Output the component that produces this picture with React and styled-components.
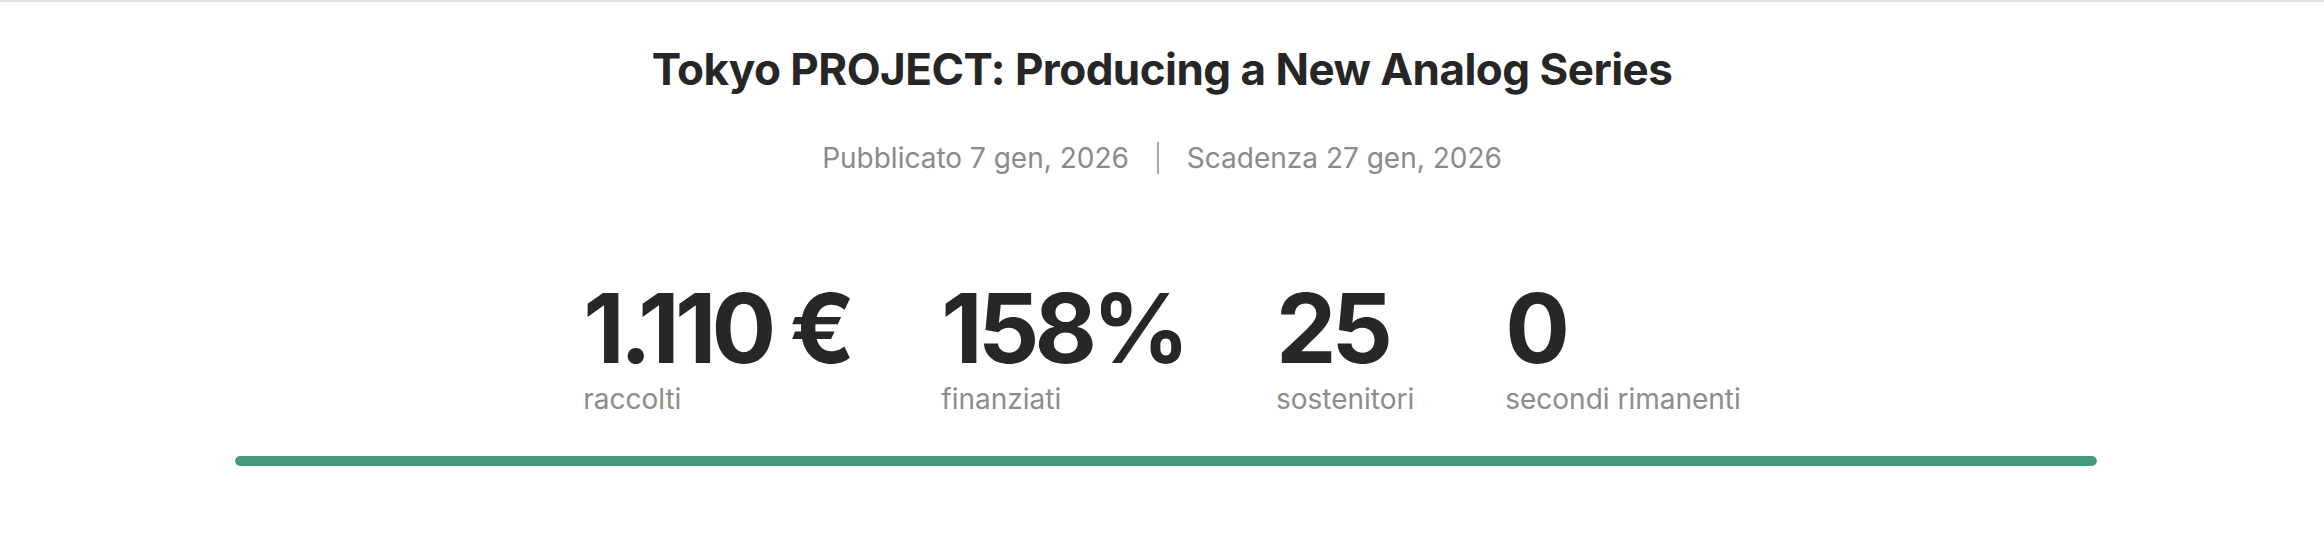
import styled, { createGlobalStyle } from 'styled-components';

const GlobalStyle = createGlobalStyle`
  body {
    margin: 0;
    background: #fff;
    font-family: Inter, "Noto Sans", sans-serif;
    color: #2a2a2a;
  }
`;

const Page = styled.section`
  border-top: 2px solid #e2e2e2;
  padding: 41px 0 60px;
  display: flex;
  flex-direction: column;
  align-items: center;
`;

const Title = styled.h1`
  margin: 0;
  font-size: 44px;
  font-weight: 700;
  letter-spacing: -0.012em;
  line-height: 1.2;
  color: #262626;
`;

const Meta = styled.div`
  margin-top: 45px;
  display: flex;
  align-items: center;
  font-size: 28px;
  color: #8a8a8a;
`;

const Divider = styled.span`
  width: 2px;
  height: 32px;
  margin: 0 28px;
  background: #a8a8a8;
`;

const Stats = styled.div`
  margin-top: 105px;
  display: flex;
  gap: 91px;
  justify-content: center;
`;

const Stat = styled.div`
  display: flex;
  flex-direction: column;
`;

const Value = styled.span`
  font-size: 96px;
  font-weight: 700;
  letter-spacing: -0.05em;
  line-height: 1;
  color: #272727;
`;

const Label = styled.span`
  margin-top: 6px;
  font-size: 28px;
  color: #8c8c8c;
`;

const Track = styled.div`
  margin: 40px 0 0 8px;
  width: 1862px;
  height: 10px;
  border-radius: 5px;
  background: #dcdcdc;
  overflow: hidden;
`;

const Fill = styled.div`
  height: 100%;
  border-radius: 5px;
  background: #449b78;
`;

const stats = [
  { value: '1.110 €', label: 'raccolti' },
  { value: '158%', label: 'finanziati' },
  { value: '25', label: 'sostenitori' },
  { value: '0', label: 'secondi rimanenti' },
];

export default function App() {
  const funded = 158;
  return (
    <>
      <GlobalStyle />
      <Page>
        <Title>Tokyo PROJECT: Producing a New Analog Series</Title>
        <Meta>
          <span>Pubblicato 7 gen, 2026</span>
          <Divider />
          <span>Scadenza 27 gen, 2026</span>
        </Meta>
        <Stats>
          {stats.map((s) => (
            <Stat key={s.label}>
              <Value>{s.value}</Value>
              <Label>{s.label}</Label>
            </Stat>
          ))}
        </Stats>
        <Track>
          <Fill style={{ width: `${Math.min(funded, 100)}%` }} />
        </Track>
      </Page>
    </>
  );
}
